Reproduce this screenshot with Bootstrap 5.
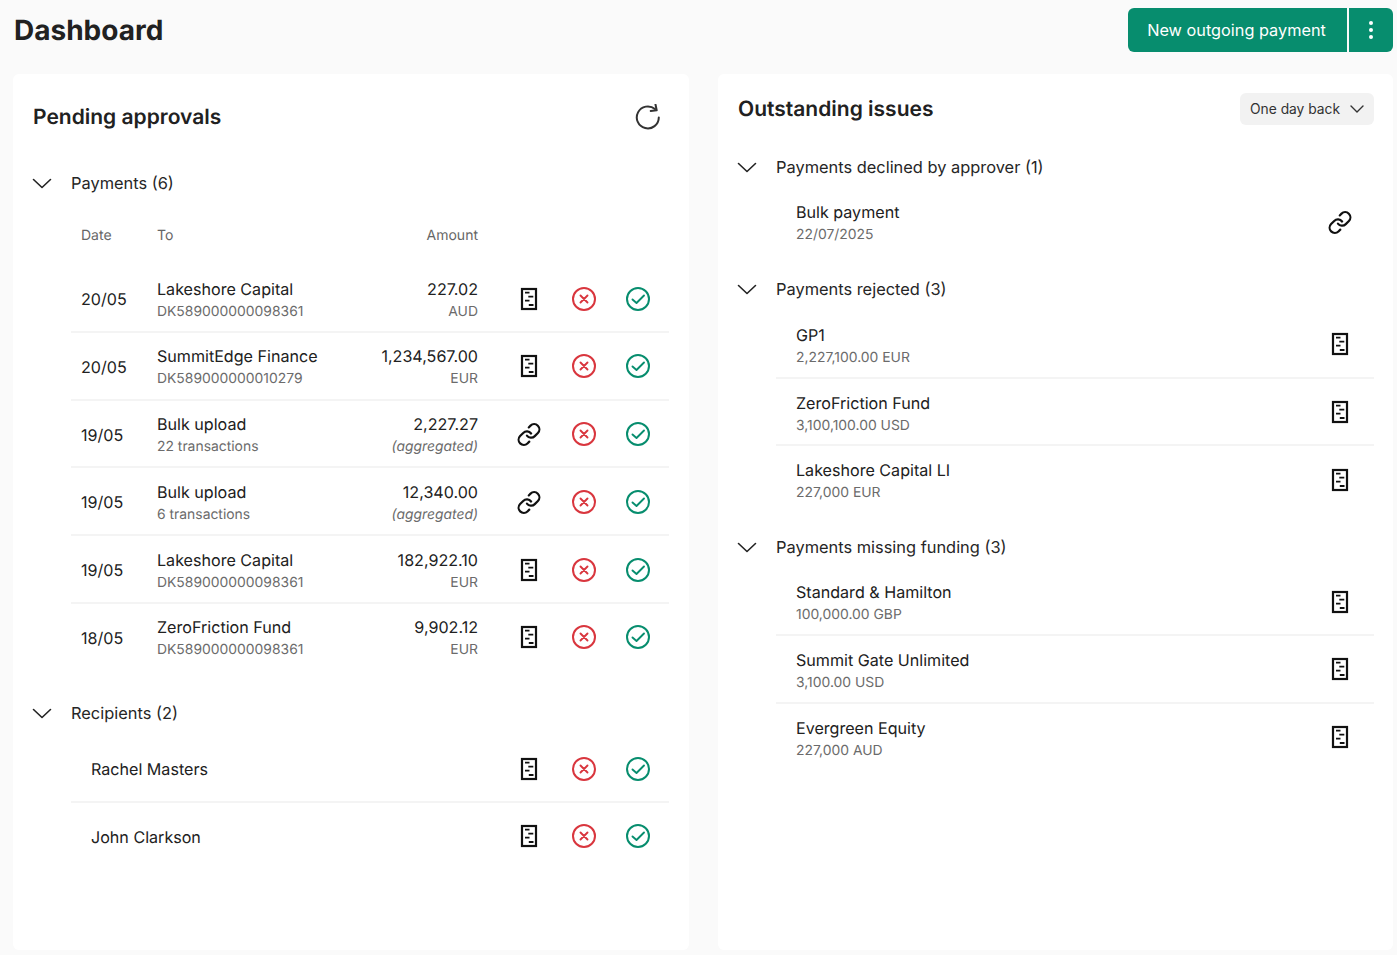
<!DOCTYPE html>
<html lang="en">
<head>
<meta charset="utf-8">
<title>Dashboard</title>
<link href="https://cdn.jsdelivr.net/npm/bootstrap@5.3.0/dist/css/bootstrap.min.css" rel="stylesheet">
<style>
html,body{height:100%;}
body{background:#fafafa;color:#212121;font-family:Inter,"Liberation Sans",sans-serif;font-size:16px;overflow:hidden;text-rendering:geometricPrecision;}
.shell{padding:0 4px 5px 13px;height:955px;display:flex;flex-direction:column;}
.topbar{height:74px;padding:8px 0 22px 1px;}
.page-title{font-size:28px;font-weight:700;line-height:44px;margin:0;}
.cta{background:#078d6e;color:#fff;border:0;height:44px;font-size:16.300px;font-weight:400;border-radius:6px 0 0 6px;width:219px;padding:0 2px 0 0;}
.cta-more{background:#078d6e;border:0;height:44px;width:44px;margin-left:2px;border-radius:0 6px 6px 0;padding:0;display:flex;align-items:center;justify-content:center;}
.cta:hover,.cta-more:hover{background:#078d6e;color:#fff;}
.panels{flex:1;gap:29px;min-height:0;}
.panel{flex:1 1 0;border:0;border-radius:6px;background:#fff;padding:20px 19px 0 20px;}
.panel-left{padding-right:20px;}
.panel-title{font-size:21px;font-weight:600;margin:0;line-height:30px;padding-top:1px;}
.head-left{height:46px;padding-right:8px;}
.head-right{height:30px;}
.period{background:#f2f2f2;border:0;border-radius:6px;height:32px;width:134px;font-size:13.800px;color:#333;padding:1px 10px 0;margin-top:-1px;}
.period:hover{background:#f2f2f2;color:#333;}
.sect{height:40px;font-size:16.400px;gap:19px;color:#262626;}
.sect-gap-a{margin-top:23px;}
.sect-gap-b{margin-top:14px;}
.sect-gap-d{margin-top:13px;}
.sect-gap-c{margin-top:21.500px;}
.cols{height:62px;padding-left:38px;padding-top:2px;font-size:14px;color:#666;}
.col-date{width:76px;flex:none;padding-left:10px;box-sizing:content-box;}
.col-to{flex:1 1 0;min-width:0;}
.col-amt{width:150px;flex:none;text-align:right;}
.listing{margin-left:38px;}
.listing-tight{margin-top:2px;}
.line{height:67.750px;border-bottom:2px solid #f4f4f4;padding-top:1.500px;}
.line:last-child{border-bottom-color:transparent;}
.line-date{width:86px;flex:none;padding:1px 0 0 10px;font-size:16.100px;}
.who{flex:1 1 0;min-width:0;padding-top:1px;}
.who-name{font-size:16.100px;line-height:24px;}
.who-sub{font-size:13.900px;line-height:20px;color:#6b6b6b;margin-top:1px;}
.amount{width:150px;flex:none;text-align:right;padding-top:1px;}
.acts{margin-left:24px;padding-right:4px;flex:none;width:167px;}
.act{width:54.500px;flex:none;display:flex;justify-content:center;align-items:center;}
.simple{padding-left:20px;}
.right-list{margin-left:38px;margin-top:1px;}
.right-line{padding:1.500px 22px 0 20px;}
.right-line .who{padding-top:2px;}
.ic{width:24px;height:24px;display:block;}
.chev{width:20px;height:11px;flex:none;display:block;margin-left:-1px;}
.sm-chev{width:14px;height:8px;display:block;}
</style>
</head>
<body>
<svg width="0" height="0" class="position-absolute">
<defs>
<symbol id="i-doc" viewBox="0 0 24 24"><rect x="5" y="2" width="14" height="20" fill="none" stroke="#111" stroke-width="2.200"/><path d="M8 5.700h4.500M11.300 9.700h5M8 13.700h4.500M11.800 18h4.700" stroke="#111" stroke-width="1.800" fill="none"/></symbol>
<symbol id="i-link" viewBox="0.500 0 23 23"><path d="M10 13a5 5 0 0 0 7.540.54l3-3a5 5 0 0 0-7.070-7.070l-1.720 1.710" fill="none" stroke="#111" stroke-width="2.100" stroke-linecap="round" stroke-linejoin="round"/><path d="M14 11a5 5 0 0 0-7.540-.54l-3 3a5 5 0 0 0 7.070 7.070l1.710-1.710" fill="none" stroke="#111" stroke-width="2.100" stroke-linecap="round" stroke-linejoin="round"/></symbol>
<symbol id="i-no" viewBox="0 0 24 24"><circle cx="12" cy="12" r="11" fill="none" stroke="#d9363e" stroke-width="2"/><path d="M8.500 8.500l7 7M15.500 8.500l-7 7" stroke="#d9363e" stroke-width="1.900" fill="none" stroke-linecap="round"/></symbol>
<symbol id="i-yes" viewBox="0 0 24 24"><circle cx="12" cy="12" r="11" fill="none" stroke="#078d6e" stroke-width="2"/><path d="M6.500 12.500l4 3.500 7.500-7.500" stroke="#078d6e" stroke-width="1.900" fill="none" stroke-linecap="round" stroke-linejoin="round"/></symbol>
<symbol id="i-chev" viewBox="0 0 20 11"><path d="M1.500 1.500L10 9.500l8.500-8" fill="none" stroke="#222" stroke-width="1.600" stroke-linecap="round" stroke-linejoin="round"/></symbol>
</defs>
</svg>
<div class="shell">
  <header class="topbar d-flex justify-content-between align-items-start">
    <h1 class="page-title">Dashboard</h1>
    <div class="d-flex">
      <button type="button" class="btn cta">New outgoing payment</button>
      <button type="button" class="btn cta-more" aria-label="More"><svg width="6" height="20" viewBox="0 0 6 20"><circle cx="3" cy="3" r="2" fill="#fff"/><circle cx="3" cy="10" r="2" fill="#fff"/><circle cx="3" cy="17" r="2" fill="#fff"/></svg></button>
    </div>
  </header>
  <main class="panels d-flex">
    <section class="card panel panel-left">
      <div class="head-left d-flex justify-content-between align-items-center">
        <h2 class="panel-title">Pending approvals</h2>
        <svg width="26" height="26" viewBox="0 0 26 26" fill="none" stroke="#333" stroke-width="2"><path d="M23.800 13.500a11 11 0 1 1-3.800-8.400" stroke-linecap="round"/><path d="M20.500 0.500l1.200 5.800-6 .7" stroke-linecap="round" stroke-linejoin="round"/></svg>
      </div>
      <div class="sect sect-gap-a d-flex align-items-center"><svg class="chev"><use href="#i-chev"/></svg><span>Payments (6)</span></div>
      <div class="cols d-flex align-items-center"><div class="col-date">Date</div><div class="col-to">To</div><div class="col-amt">Amount</div><div class="acts"></div></div>
      <div class="listing">
        <div class="line d-flex align-items-center"><div class="line-date">20/05</div><div class="who"><div class="who-name">Lakeshore Capital</div><div class="who-sub">DK589000000098361</div></div><div class="amount"><div class="who-name">227.02</div><div class="who-sub">AUD</div></div><div class="acts d-flex"><div class="act"><svg class="ic"><use href="#i-doc"/></svg></div><div class="act"><svg class="ic"><use href="#i-no"/></svg></div><div class="act"><svg class="ic"><use href="#i-yes"/></svg></div></div></div>
        <div class="line d-flex align-items-center"><div class="line-date">20/05</div><div class="who"><div class="who-name">SummitEdge Finance</div><div class="who-sub">DK589000000010279</div></div><div class="amount"><div class="who-name">1,234,567.00</div><div class="who-sub">EUR</div></div><div class="acts d-flex"><div class="act"><svg class="ic"><use href="#i-doc"/></svg></div><div class="act"><svg class="ic"><use href="#i-no"/></svg></div><div class="act"><svg class="ic"><use href="#i-yes"/></svg></div></div></div>
        <div class="line d-flex align-items-center"><div class="line-date">19/05</div><div class="who"><div class="who-name">Bulk upload</div><div class="who-sub">22 transactions</div></div><div class="amount"><div class="who-name">2,227.27</div><div class="who-sub fst-italic">(aggregated)</div></div><div class="acts d-flex"><div class="act"><svg class="ic"><use href="#i-link"/></svg></div><div class="act"><svg class="ic"><use href="#i-no"/></svg></div><div class="act"><svg class="ic"><use href="#i-yes"/></svg></div></div></div>
        <div class="line d-flex align-items-center"><div class="line-date">19/05</div><div class="who"><div class="who-name">Bulk upload</div><div class="who-sub">6 transactions</div></div><div class="amount"><div class="who-name">12,340.00</div><div class="who-sub fst-italic">(aggregated)</div></div><div class="acts d-flex"><div class="act"><svg class="ic"><use href="#i-link"/></svg></div><div class="act"><svg class="ic"><use href="#i-no"/></svg></div><div class="act"><svg class="ic"><use href="#i-yes"/></svg></div></div></div>
        <div class="line d-flex align-items-center"><div class="line-date">19/05</div><div class="who"><div class="who-name">Lakeshore Capital</div><div class="who-sub">DK589000000098361</div></div><div class="amount"><div class="who-name">182,922.10</div><div class="who-sub">EUR</div></div><div class="acts d-flex"><div class="act"><svg class="ic"><use href="#i-doc"/></svg></div><div class="act"><svg class="ic"><use href="#i-no"/></svg></div><div class="act"><svg class="ic"><use href="#i-yes"/></svg></div></div></div>
        <div class="line d-flex align-items-center"><div class="line-date">18/05</div><div class="who"><div class="who-name">ZeroFriction Fund</div><div class="who-sub">DK589000000098361</div></div><div class="amount"><div class="who-name">9,902.12</div><div class="who-sub">EUR</div></div><div class="acts d-flex"><div class="act"><svg class="ic"><use href="#i-doc"/></svg></div><div class="act"><svg class="ic"><use href="#i-no"/></svg></div><div class="act"><svg class="ic"><use href="#i-yes"/></svg></div></div></div>
      </div>
      <div class="sect sect-gap-c d-flex align-items-center"><svg class="chev"><use href="#i-chev"/></svg><span>Recipients (2)</span></div>
      <div class="listing listing-tight">
        <div class="line d-flex align-items-center"><div class="who simple who-name">Rachel Masters</div><div class="acts d-flex"><div class="act"><svg class="ic"><use href="#i-doc"/></svg></div><div class="act"><svg class="ic"><use href="#i-no"/></svg></div><div class="act"><svg class="ic"><use href="#i-yes"/></svg></div></div></div>
        <div class="line d-flex align-items-center"><div class="who simple who-name">John Clarkson</div><div class="acts d-flex"><div class="act"><svg class="ic"><use href="#i-doc"/></svg></div><div class="act"><svg class="ic"><use href="#i-no"/></svg></div><div class="act"><svg class="ic"><use href="#i-yes"/></svg></div></div></div>
      </div>
    </section>
    <section class="card panel">
      <div class="head-right d-flex justify-content-between align-items-center">
        <h2 class="panel-title">Outstanding issues</h2>
        <button type="button" class="btn period d-flex align-items-center justify-content-between"><span>One day back</span><svg class="sm-chev" viewBox="0 0 14 8"><path d="M1 1l6 6 6-6" fill="none" stroke="#333" stroke-width="1.400" stroke-linecap="round" stroke-linejoin="round"/></svg></button>
      </div>
      <div class="sect sect-gap-a d-flex align-items-center"><svg class="chev"><use href="#i-chev"/></svg><span>Payments declined by approver (1)</span></div>
      <div class="right-list">
        <div class="line right-line d-flex align-items-center"><div class="who"><div class="who-name">Bulk payment</div><div class="who-sub">22/07/2025</div></div><svg class="ic"><use href="#i-link"/></svg></div>
      </div>
      <div class="sect sect-gap-b d-flex align-items-center"><svg class="chev"><use href="#i-chev"/></svg><span>Payments rejected (3)</span></div>
      <div class="right-list">
        <div class="line right-line d-flex align-items-center"><div class="who"><div class="who-name">GP1</div><div class="who-sub">2,227,100.00 EUR</div></div><svg class="ic"><use href="#i-doc"/></svg></div>
        <div class="line right-line d-flex align-items-center"><div class="who"><div class="who-name">ZeroFriction Fund</div><div class="who-sub">3,100,100.00 USD</div></div><svg class="ic"><use href="#i-doc"/></svg></div>
        <div class="line right-line d-flex align-items-center"><div class="who"><div class="who-name">Lakeshore Capital LI</div><div class="who-sub">227,000 EUR</div></div><svg class="ic"><use href="#i-doc"/></svg></div>
      </div>
      <div class="sect sect-gap-d d-flex align-items-center"><svg class="chev"><use href="#i-chev"/></svg><span>Payments missing funding (3)</span></div>
      <div class="right-list">
        <div class="line right-line d-flex align-items-center"><div class="who"><div class="who-name">Standard &amp; Hamilton</div><div class="who-sub">100,000.00 GBP</div></div><svg class="ic"><use href="#i-doc"/></svg></div>
        <div class="line right-line d-flex align-items-center"><div class="who"><div class="who-name">Summit Gate Unlimited</div><div class="who-sub">3,100.00 USD</div></div><svg class="ic"><use href="#i-doc"/></svg></div>
        <div class="line right-line d-flex align-items-center"><div class="who"><div class="who-name">Evergreen Equity</div><div class="who-sub">227,000 AUD</div></div><svg class="ic"><use href="#i-doc"/></svg></div>
      </div>
    </section>
  </main>
</div>
<script src="https://cdn.jsdelivr.net/npm/bootstrap@5.3.0/dist/js/bootstrap.bundle.min.js"></script>
</body>
</html>
